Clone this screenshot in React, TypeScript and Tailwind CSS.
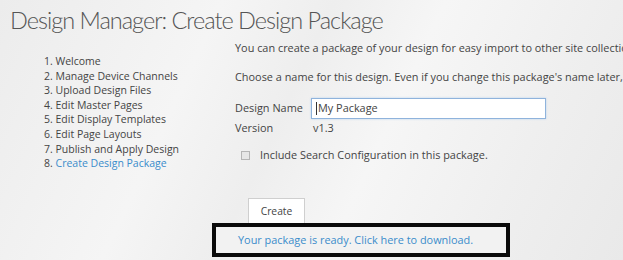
import React from 'react';

const steps = [
  'Welcome',
  'Manage Device Channels',
  'Upload Design Files',
  'Edit Master Pages',
  'Edit Display Templates',
  'Edit Page Layouts',
  'Publish and Apply Design',
  'Create Design Package',
];

const App: React.FC = () => {
  return (
    <div
      className="w-[623px] h-[260px] overflow-hidden text-[#444] font-['Open_Sans',sans-serif]"
      style={{
        background:
          'linear-gradient(115deg, #ececec 0%, #f5f5f5 30%, #eeeeee 45%, #f6f6f6 60%, #efefef 80%, #e9e9e9 100%)',
      }}
    >
      <h1 className="pl-[10px] pt-[1px] h-[38px] text-[23.5px] leading-[38px] tracking-[-1px] font-light text-[#555] whitespace-nowrap font-['Lato',sans-serif]">
        Design Manager: Create Design Package
      </h1>

      <div className="flex">
        <ol className="w-[235px] shrink-0 pl-[44px] pt-[16px] text-[10.5px] leading-[14.6px] whitespace-nowrap">
          {steps.map((s, i) => (
            <li key={s} className={i === steps.length - 1 ? 'text-[#3a8ccb]' : ''}>
              <span className="text-[#444]">{i + 1}.</span> {s}
            </li>
          ))}
        </ol>

        <div className="flex-1 min-w-0 text-[10.9px] whitespace-nowrap">
          <p className="leading-[20px]">
            You can create a package of your design for easy import to other site collections.
          </p>
          <p className="mt-[9px] leading-[20px]">
            Choose a name for this design. Even if you change this package's name later, we will keep track of it.
          </p>

          <div className="mt-[11px] flex items-center h-[21px]">
            <span className="w-[76px]">Design Name</span>
            <div className="w-[235px] h-[21px] border border-[#8fb3dc] bg-white flex items-center pl-[4px] shadow-[0_0_2px_#b9d2ee]">
              <span className="w-px h-[13px] bg-[#333] mr-px" />
              <span>My Package</span>
            </div>
          </div>
          <div className="flex h-[18px] items-center">
            <span className="w-[78px]">Version</span>
            <span>v1.3</span>
          </div>

          <label className="mt-[9px] ml-[6px] flex items-center h-[18px] gap-[10px]">
            <span className="w-[9px] h-[9px] border border-[#b5b5b5] bg-[#e6e6e6]" />
            <span>Include Search Configuration in this package.</span>
          </label>

          <div className="mt-[34px] ml-[13px] w-[57px] h-[28px] border border-[#cfcfcf] bg-white flex items-center justify-center text-[10.3px]">
            Create
          </div>
          <div className="relative -mt-[3px] -ml-[23px] w-[298px] h-[34px] border-[4px] border-[#0a0a0a] bg-[#f2f2f2] flex items-center pl-[22px] text-[#3a8ccb]">
            Your package is ready. Click here to download.
          </div>
        </div>
      </div>
    </div>
  );
};

export default App;
